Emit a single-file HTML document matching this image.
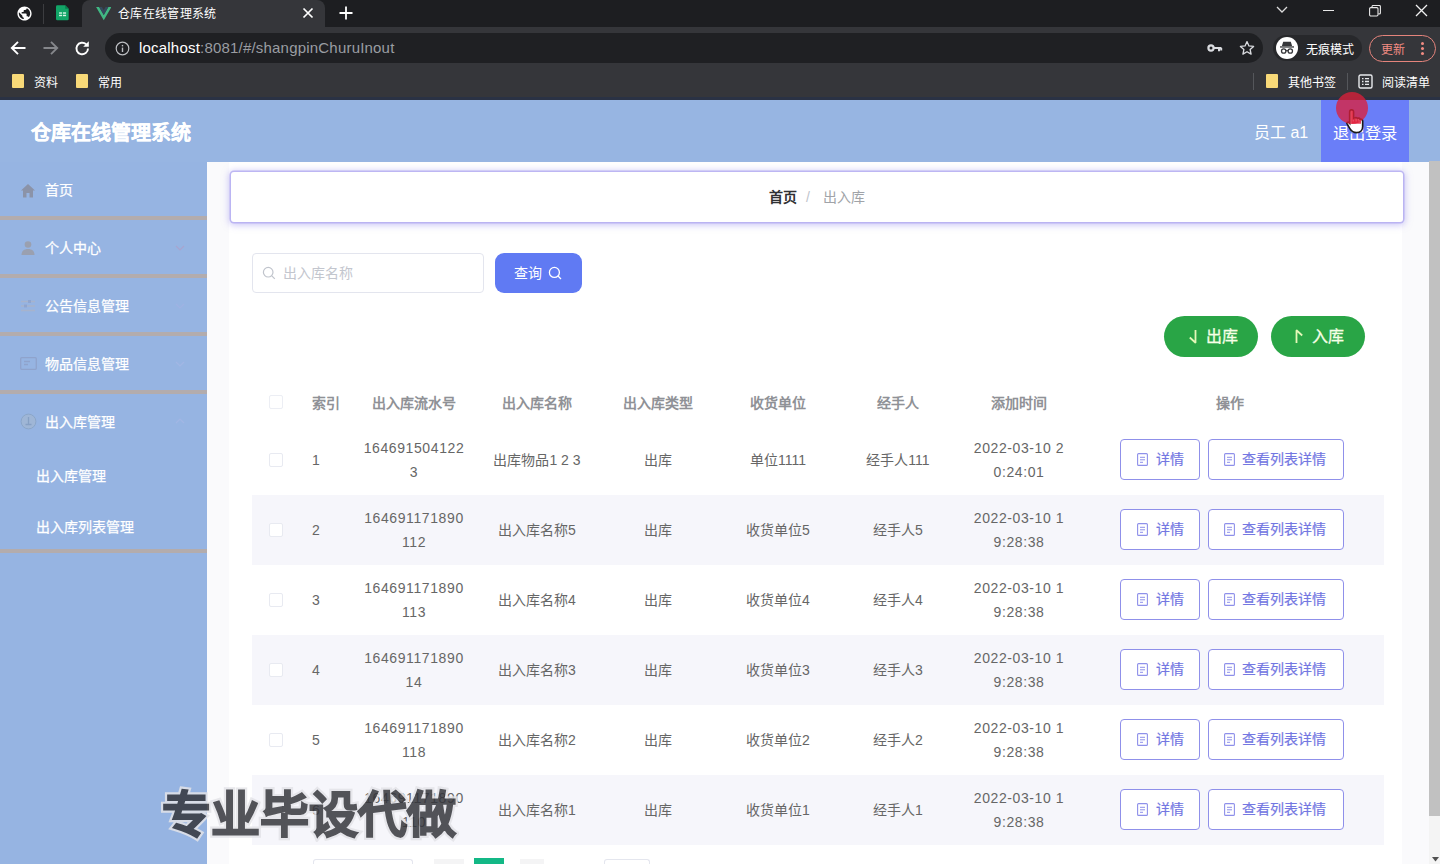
<!DOCTYPE html>
<html lang="zh-CN">
<head>
<meta charset="utf-8">
<title>仓库在线管理系统</title>
<style>
*{box-sizing:border-box;margin:0;padding:0}
html,body{width:1440px;height:864px;overflow:hidden;background:#fff;font-family:"Liberation Sans",sans-serif;}
body{position:relative}
.abs{position:absolute}
/* ---------- browser chrome ---------- */
#tabstrip{left:0;top:0;width:1440px;height:27px;background:#1d1e21}
#tab{left:82px;top:0;width:243px;height:27px;background:#35363a;border-radius:8px 8px 0 0}
#toolbar{left:0;top:27px;width:1440px;height:39px;background:#35363a}
#omni{left:105px;top:33px;width:1158px;height:30px;border-radius:15px;background:#1f2023}
#bookmarks{left:0;top:66px;width:1440px;height:32px;background:#35363a}
#chromeline{left:0;top:97px;width:1440px;height:3px;background:#2a3244}
.ct{color:#fff;font-size:12px;line-height:14px;white-space:nowrap;margin-top:1px}
/* ---------- app ---------- */
#header{left:0;top:100px;width:1440px;height:61.5px;background:#97b5e2}
#sidebar{left:0;top:162px;width:207px;height:702px;background:#96b4e2}
#main{left:207px;top:162px;width:1222px;height:702px;background:#fafafc}
#card{left:229px;top:162px;width:1173px;height:702px;background:#fff}
.mi{left:0;width:207px;height:58px;border-bottom:4px solid #b3acad;color:#fff;font-size:14px;-webkit-text-stroke:.25px #fff}
.mi span{position:absolute;left:45px;top:19px;line-height:18px}
.sub{left:36px;color:#fff;font-size:14px;-webkit-text-stroke:.25px #fff;line-height:18px}
#scroll{left:1429px;top:161px;width:11px;height:703px;background:#f4f4f4}
#thumb{left:1429px;top:161px;width:11px;height:655px;background:#c1c1c1}
/* table */
.th{top:395px;font-size:14px;color:#8f9196;font-weight:bold;line-height:16px;text-align:center;white-space:nowrap}
.row{left:252px;width:1132px;height:70px}
.row.s{background:#f6f6fb}
.c{position:absolute;font-size:14px;color:#666;line-height:24px;text-align:center;white-space:nowrap}
.cb{position:absolute;left:17px;top:28px;width:14px;height:14px;border:1px solid #e8eaf1;border-radius:2px;background:#fff}
.btn{position:absolute;top:14px;height:41px;border:1px solid #8f90ea;border-radius:4px;background:#fff;color:#7377e2;font-size:14px;line-height:39px;text-align:left;white-space:nowrap;-webkit-text-stroke:.2px #7377e2}
.btn span{position:absolute;top:0}
.n{letter-spacing:.6px}
</style>
</head>
<body>
<!-- chrome -->
<div id="tabstrip" class="abs"></div>
<div id="tab" class="abs"></div>
<div id="toolbar" class="abs"></div>
<div id="omni" class="abs"></div>
<div id="bookmarks" class="abs"></div>
<div id="chromeline" class="abs"></div>
<!-- tab strip icons -->
<svg class="abs" style="left:15.500px;top:4.500px" width="17" height="17" viewBox="0 0 24 24"><path fill="#fff" d="M12 2C6.480 2 2 6.480 2 12s4.480 10 10 10 10-4.480 10-10S17.520 2 12 2zm-1 17.930c-3.950-.490-7-3.850-7-7.930 0-.620.080-1.210.210-1.790L9 15v1c0 1.100.900 2 2 2v1.930zm6.900-2.540c-.260-.810-1-1.390-1.900-1.390h-1v-3c0-.550-.450-1-1-1H8v-2h2c.550 0 1-.450 1-1V7h2c1.100 0 2-.900 2-2v-.410c2.930 1.190 5 4.060 5 7.410 0 2.080-.800 3.970-2.100 5.390z"/></svg>
<div class="abs" style="left:43px;top:4px;width:1px;height:20px;background:#3c3d40"></div>
<svg class="abs" style="left:56px;top:5px" width="14" height="15.500" viewBox="0 0 16 17"><path d="M1.500 0h9l4 4v11.500a1.500 1.500 0 0 1-1.500 1.500h-11.500a1.500 1.500 0 0 1-1.500-1.500v-14a1.500 1.500 0 0 1 1.500-1.500z" fill="#12a567"/><path d="M10.500 0l4 4h-4z" fill="#0b7d4d"/><rect x="3.500" y="8" width="3.500" height="1.600" fill="#d7f5e6"/><rect x="8" y="8" width="3.500" height="1.600" fill="#d7f5e6"/><rect x="3.500" y="10.800" width="3.500" height="1.600" fill="#d7f5e6"/><rect x="8" y="10.800" width="3.500" height="1.600" fill="#d7f5e6"/></svg>
<svg class="abs" style="left:95.500px;top:7px" width="15.500" height="13.500" viewBox="0 0 17 15"><path d="M0 0h3.400l5.100 8.800 5.100-8.800h3.400l-8.500 14.700z" fill="#41b883"/><path d="M3.400 0h3.100l2 3.500 2-3.500h3.100l-5.100 8.800z" fill="#35495e"/></svg>
<div class="abs ct" style="left:118px;top:6px;font-size:12px;letter-spacing:.35px">仓库在线管理系统</div>
<svg class="abs" style="left:302px;top:7px" width="12" height="12" viewBox="0 0 12 12"><path d="M1.500 1.500l9 9M10.500 1.500l-9 9" stroke="#fff" stroke-width="1.700"/></svg>
<svg class="abs" style="left:339px;top:6px" width="14" height="14" viewBox="0 0 14 14"><path d="M7 0.500v13M0.500 7h13" stroke="#fff" stroke-width="1.800"/></svg>
<!-- window controls -->
<svg class="abs" style="left:1276px;top:6px" width="12" height="8" viewBox="0 0 12 8"><path d="M1 1l5 5 5-5" stroke="#dcdcdc" stroke-width="1.300" fill="none"/></svg>
<div class="abs" style="left:1323px;top:10px;width:11px;height:1px;background:#e8e8e8"></div>
<svg class="abs" style="left:1369px;top:5px" width="12" height="12" viewBox="0 0 12 12"><rect x="0.600" y="2.600" width="8.400" height="8.400" rx="1.200" fill="none" stroke="#e8e8e8" stroke-width="1.100"/><path d="M3 2.500v-1a1 1 0 0 1 1-1h6.400a1 1 0 0 1 1 1v6.400a1 1 0 0 1-1 1h-1" fill="none" stroke="#e8e8e8" stroke-width="1.100"/></svg>
<svg class="abs" style="left:1415px;top:4px" width="13" height="13" viewBox="0 0 13 13"><path d="M1 1l11 11M12 1l-11 11" stroke="#f2f2f2" stroke-width="1.300"/></svg>
<!-- toolbar -->
<svg class="abs" style="left:10px;top:40px" width="17" height="16" viewBox="0 0 17 16"><path d="M15.500 8h-13M8 1.800l-6.200 6.200 6.200 6.200" stroke="#fff" stroke-width="1.900" fill="none"/></svg>
<svg class="abs" style="left:42px;top:40px" width="17" height="16" viewBox="0 0 17 16"><path d="M1.500 8h13M9 1.800l6.200 6.200-6.200 6.200" stroke="#85878b" stroke-width="1.900" fill="none"/></svg>
<svg class="abs" style="left:74px;top:40px" width="17" height="17" viewBox="0 0 17 17"><path d="M14 8.500a5.800 5.800 0 1 1-1.800-4.200" stroke="#fff" stroke-width="1.900" fill="none"/><path d="M14.800 1.200v5.600h-5.600z" fill="#fff"/></svg>
<svg class="abs" style="left:115px;top:41px" width="15" height="15" viewBox="0 0 15 15"><circle cx="7.500" cy="7.500" r="6.300" fill="none" stroke="#bdbfc3" stroke-width="1.200"/><rect x="6.800" y="6.600" width="1.400" height="4.400" fill="#bdbfc3"/><rect x="6.800" y="3.900" width="1.400" height="1.500" fill="#bdbfc3"/></svg>
<div class="abs" style="left:139px;top:39px;font-size:15px;line-height:18px;color:#9a9da2;white-space:nowrap;letter-spacing:0.2px"><span style="color:#fff">localhost</span>:8081/#/shangpinChuruInout</div>
<svg class="abs" style="left:1207px;top:43px" width="16" height="10" viewBox="0 0 16 10"><circle cx="4" cy="5" r="2.600" fill="none" stroke="#dadce0" stroke-width="2.200"/><path d="M6.500 5h8M12 5v3.200M14.200 5v2.400" stroke="#dadce0" stroke-width="2" fill="none"/></svg>
<svg class="abs" style="left:1239px;top:40px" width="16" height="16" viewBox="0 0 16 16"><path d="M8 1.600l1.950 4.300 4.650.5-3.500 3.100 1 4.600-4.100-2.400-4.100 2.400 1-4.600-3.500-3.100 4.650-.5z" fill="none" stroke="#dadce0" stroke-width="1.300" stroke-linejoin="round"/></svg>
<div class="abs" style="left:1273px;top:35px;width:89px;height:26px;border-radius:13px;background:#27282b"></div><div class="abs" style="left:1276px;top:37px;width:22px;height:22px;border-radius:11px;background:#fff"></div>
<svg class="abs" style="left:1279px;top:41px" width="16" height="14" viewBox="0 0 16 14"><path d="M4.200 0.800h7.600l1.300 4.200h-10.200z" fill="#36373a"/><rect x="1" y="5.300" width="14" height="1.300" fill="#36373a"/><circle cx="4.700" cy="10" r="2.200" fill="none" stroke="#36373a" stroke-width="1.300"/><circle cx="11.300" cy="10" r="2.200" fill="none" stroke="#36373a" stroke-width="1.300"/><path d="M6.900 9.700h2.200" stroke="#36373a" stroke-width="1.200"/></svg>
<div class="abs ct" style="left:1306px;top:42px;font-size:12px">无痕模式</div>
<div class="abs" style="left:1369px;top:35px;width:67px;height:27px;border:1px solid #e5847c;border-radius:14px"></div>
<div class="abs ct" style="left:1381px;top:42px;font-size:12px;color:#f28b82">更新</div>
<div class="abs" style="left:1421px;top:42px;width:3px;height:3px;border-radius:2px;background:#f28b82;box-shadow:0 5px 0 #f28b82,0 10px 0 #f28b82"></div>
<!-- bookmarks -->
<div class="abs" style="left:12px;top:74px;width:12px;height:14px;background:#f8d978;border-radius:1px"></div>
<div class="abs ct" style="left:34px;top:75px">资料</div>
<div class="abs" style="left:76px;top:74px;width:12px;height:14px;background:#f8d978;border-radius:1px"></div>
<div class="abs ct" style="left:98px;top:75px">常用</div>
<div class="abs" style="left:1253px;top:73px;width:1px;height:17px;background:#55575b"></div>
<div class="abs" style="left:1266px;top:74px;width:12px;height:14px;background:#f8d978;border-radius:1px"></div>
<div class="abs ct" style="left:1288px;top:75px">其他书签</div>
<div class="abs" style="left:1347px;top:73px;width:1px;height:17px;background:#55575b"></div>
<svg class="abs" style="left:1358px;top:74px" width="15" height="15" viewBox="0 0 15 15"><rect x="1" y="1" width="13" height="13" rx="1.500" fill="none" stroke="#e8eaed" stroke-width="1.400"/><path d="M4 4.700h1.500M7 4.700h4M4 7.500h1.500M7 7.500h4M4 10.300h1.500M7 10.300h4" stroke="#e8eaed" stroke-width="1.300"/></svg>
<div class="abs ct" style="left:1382px;top:75px">阅读清单</div>


<!-- app -->
<div id="header" class="abs"></div>
<div id="sidebar" class="abs"></div>
<div id="main" class="abs"></div>
<div id="card" class="abs"></div>
<div id="scroll" class="abs"></div>
<div id="thumb" class="abs"></div>
<!-- header content -->
<div class="abs" style="left:30.5px;top:120px;font-size:20px;line-height:26px;font-weight:bold;color:#fff;white-space:nowrap;-webkit-text-stroke:0.3px #fff">仓库在线管理系统</div>
<div class="abs" style="left:1254px;top:121.5px;font-size:16px;line-height:22px;color:#fff;white-space:nowrap">员工 a1</div>
<div class="abs" style="left:1321px;top:100px;width:88px;height:61.5px;background:#6a7ef8"></div>
<div class="abs" style="left:1333px;top:121.5px;font-size:16.3px;line-height:22px;color:#fff;white-space:nowrap">退出登录</div>

<!-- sidebar menu -->
<div class="abs mi" style="top:162px"><span>首页</span></div>
<div class="abs mi" style="top:220px"><span>个人中心</span></div>
<div class="abs mi" style="top:278px"><span>公告信息管理</span></div>
<div class="abs mi" style="top:336px"><span>物品信息管理</span></div>
<div class="abs mi" style="top:394px;height:159px"><span>出入库管理</span></div>
<div class="abs sub" style="top:467px">出入库管理</div>
<div class="abs sub" style="top:518px">出入库列表管理</div>
<!-- sidebar icons -->
<svg class="abs" style="left:20px;top:183px" width="16" height="16" viewBox="0 0 16 16"><path d="M8 1l7 6.500h-2v7h-3.500v-4.500h-3v4.500h-3.500v-7h-2z" fill="#8b93a8"/></svg>
<svg class="abs" style="left:21px;top:240px" width="14" height="16" viewBox="0 0 14 16"><circle cx="7" cy="4.500" r="3.300" fill="#9aa0b0"/><path d="M0.500 15c0-4 2.500-6 6.500-6s6.500 2 6.500 6z" fill="#9aa0b0"/></svg>
<svg class="abs" style="left:20px;top:298px" width="16" height="16" viewBox="0 0 16 16"><path d="M1 3.500h14M1 8h14M1 12.500h14" stroke="#a7b3cc" stroke-width="1.400"/><rect x="8" y="2" width="3" height="3" fill="#8fa5cf"/><rect x="4" y="6.500" width="3" height="3" fill="#8fa5cf"/></svg>
<svg class="abs" style="left:20px;top:356px" width="17" height="15" viewBox="0 0 17 15"><rect x="0.700" y="1.700" width="15.600" height="11.600" rx="1" fill="none" stroke="#8fa3cc" stroke-width="1.300"/><path d="M4 5.500h6M4 8.500h4" stroke="#8fa3cc" stroke-width="1.300"/></svg>
<svg class="abs" style="left:20px;top:413px" width="17" height="17" viewBox="0 0 17 17"><circle cx="8.500" cy="8.500" r="7.400" fill="#9fb6d6" stroke="#8ba6c9" stroke-width="1"/><path d="M8.500 4v7M5.500 11.500h6" stroke="#86a0c4" stroke-width="1.300" fill="none"/></svg>
<!-- arrows -->
<svg class="abs" style="left:175px;top:245px" width="10" height="6" viewBox="0 0 10 6"><path d="M1 1l4 4 4-4" stroke="#a8a4cf" stroke-width="1.200" fill="none"/></svg>
<svg class="abs" style="left:175px;top:303px" width="10" height="6" viewBox="0 0 10 6"><path d="M1 1l4 4 4-4" stroke="#9fb2e3" stroke-width="1.200" fill="none"/></svg>
<svg class="abs" style="left:175px;top:361px" width="10" height="6" viewBox="0 0 10 6"><path d="M1 1l4 4 4-4" stroke="#a2b6e4" stroke-width="1.200" fill="none"/></svg>
<svg class="abs" style="left:175px;top:418px" width="10" height="6" viewBox="0 0 10 6"><path d="M1 5l4-4 4 4" stroke="#a2b6e4" stroke-width="1.200" fill="none"/></svg>

<!-- breadcrumb -->
<div class="abs" style="left:231px;top:172px;width:1172px;height:50px;background:#fff;border-radius:3px;box-shadow:0 0 0 1.5px rgba(176,168,240,.75),0 1px 7px 2px rgba(150,140,240,.5)"></div>
<div class="abs" style="left:769px;top:188px;font-size:14px;line-height:18px;font-weight:bold;color:#303133;white-space:nowrap">首页</div>
<div class="abs" style="left:806px;top:188px;font-size:14px;line-height:18px;color:#c0c4cc">/</div>
<div class="abs" style="left:823px;top:188px;font-size:14px;line-height:18px;color:#a0a3a8;white-space:nowrap">出入库</div>

<!-- search -->
<div class="abs" style="left:252px;top:253px;width:232px;height:40px;border:1px solid #e3e5ee;border-radius:4px;background:#fff"></div>
<svg class="abs" style="left:262px;top:266px" width="14" height="14" viewBox="0 0 14 14"><circle cx="6.200" cy="6.200" r="4.800" fill="none" stroke="#c0c4cc" stroke-width="1.200"/><path d="M9.800 9.800l3 3" stroke="#c0c4cc" stroke-width="1.200"/></svg>
<div class="abs" style="left:283px;top:264px;font-size:14px;line-height:18px;color:#c3c6ce;white-space:nowrap">出入库名称</div>
<div class="abs" style="left:495px;top:253px;width:87px;height:40px;border-radius:9px;background:#607af3"></div>
<div class="abs" style="left:514px;top:264px;font-size:14px;line-height:18px;color:#fff;white-space:nowrap">查询</div>
<svg class="abs" style="left:548px;top:266px" width="14" height="14" viewBox="0 0 14 14"><circle cx="6.400" cy="6.400" r="5" fill="none" stroke="#fff" stroke-width="1.300"/><path d="M10 10l3 3" stroke="#fff" stroke-width="1.300"/></svg>

<!-- green buttons -->
<div class="abs" style="left:1164px;top:316px;width:94px;height:41px;border-radius:21px;background:#29a546"></div>
<svg class="abs" style="left:1186px;top:329px" width="14" height="16" viewBox="0 0 14 16"><path d="M9.500 1v13M9.800 14l-6-5.500" stroke="#e4f8b8" stroke-width="1.800" fill="none"/></svg>
<div class="abs" style="left:1206px;top:326px;font-size:16px;line-height:22px;color:#f6ffe6;white-space:nowrap;-webkit-text-stroke:.3px #f6ffe6">出库</div>
<div class="abs" style="left:1271px;top:316px;width:94px;height:41px;border-radius:21px;background:#29a546"></div>
<svg class="abs" style="left:1292px;top:328px" width="14" height="16" viewBox="0 0 14 16"><path d="M4.500 15v-13M4.200 2l6 5.500" stroke="#e4f8b8" stroke-width="1.800" fill="none"/></svg>
<div class="abs" style="left:1312px;top:326px;font-size:16px;line-height:22px;color:#f6ffe6;white-space:nowrap;-webkit-text-stroke:.3px #f6ffe6">入库</div>

<!-- table header -->
<div class="abs" style="left:269px;top:395px;width:14px;height:14px;border:1px solid #eceef4;border-radius:2px;background:#fff"></div>
<div class="abs th" style="left:296px;width:60px">索引</div>
<div class="abs th" style="left:354px;width:120px">出入库流水号</div>
<div class="abs th" style="left:477px;width:120px">出入库名称</div>
<div class="abs th" style="left:598px;width:120px">出入库类型</div>
<div class="abs th" style="left:718px;width:120px">收货单位</div>
<div class="abs th" style="left:838px;width:120px">经手人</div>
<div class="abs th" style="left:959px;width:120px">添加时间</div>
<div class="abs th" style="left:1170px;width:120px">操作</div>
<div class="abs row" style="top:425px"><div class="cb"></div><div class="c" style="left:44px;width:40px;top:23px">1</div><div class="c n" style="left:102px;width:120px;top:11px">164691504122<br>3</div><div class="c" style="left:225px;width:120px;top:23px">出库物品1 2 3</div><div class="c" style="left:346px;width:120px;top:23px">出库</div><div class="c" style="left:466px;width:120px;top:23px">单位1111</div><div class="c" style="left:586px;width:120px;top:23px">经手人111</div><div class="c n" style="left:707px;width:120px;top:11px">2022-03-10 2<br>0:24:01</div><div class="btn" style="left:868px;width:80px"><svg style="position:absolute;left:16px;top:13px" width="11" height="13" viewBox="0 0 11 13"><rect x="0.600" y="0.600" width="9.800" height="11.800" rx="1" fill="none" stroke="#8e90ea" stroke-width="1.100"/><path d="M3 4.300h5M3 6.800h5M3 9.300h3" stroke="#8e90ea" stroke-width="1"/></svg><span style="left:35px">详情</span></div><div class="btn" style="left:956px;width:136px"><svg style="position:absolute;left:15px;top:13px" width="11" height="13" viewBox="0 0 11 13"><rect x="0.600" y="0.600" width="9.800" height="11.800" rx="1" fill="none" stroke="#8e90ea" stroke-width="1.100"/><path d="M3 4.300h5M3 6.800h5M3 9.300h3" stroke="#8e90ea" stroke-width="1"/></svg><span style="left:33px">查看列表详情</span></div></div>
<div class="abs row s" style="top:495px"><div class="cb"></div><div class="c" style="left:44px;width:40px;top:23px">2</div><div class="c n" style="left:102px;width:120px;top:11px">164691171890<br>112</div><div class="c" style="left:225px;width:120px;top:23px">出入库名称5</div><div class="c" style="left:346px;width:120px;top:23px">出库</div><div class="c" style="left:466px;width:120px;top:23px">收货单位5</div><div class="c" style="left:586px;width:120px;top:23px">经手人5</div><div class="c n" style="left:707px;width:120px;top:11px">2022-03-10 1<br>9:28:38</div><div class="btn" style="left:868px;width:80px"><svg style="position:absolute;left:16px;top:13px" width="11" height="13" viewBox="0 0 11 13"><rect x="0.600" y="0.600" width="9.800" height="11.800" rx="1" fill="none" stroke="#8e90ea" stroke-width="1.100"/><path d="M3 4.300h5M3 6.800h5M3 9.300h3" stroke="#8e90ea" stroke-width="1"/></svg><span style="left:35px">详情</span></div><div class="btn" style="left:956px;width:136px"><svg style="position:absolute;left:15px;top:13px" width="11" height="13" viewBox="0 0 11 13"><rect x="0.600" y="0.600" width="9.800" height="11.800" rx="1" fill="none" stroke="#8e90ea" stroke-width="1.100"/><path d="M3 4.300h5M3 6.800h5M3 9.300h3" stroke="#8e90ea" stroke-width="1"/></svg><span style="left:33px">查看列表详情</span></div></div>
<div class="abs row" style="top:565px"><div class="cb"></div><div class="c" style="left:44px;width:40px;top:23px">3</div><div class="c n" style="left:102px;width:120px;top:11px">164691171890<br>113</div><div class="c" style="left:225px;width:120px;top:23px">出入库名称4</div><div class="c" style="left:346px;width:120px;top:23px">出库</div><div class="c" style="left:466px;width:120px;top:23px">收货单位4</div><div class="c" style="left:586px;width:120px;top:23px">经手人4</div><div class="c n" style="left:707px;width:120px;top:11px">2022-03-10 1<br>9:28:38</div><div class="btn" style="left:868px;width:80px"><svg style="position:absolute;left:16px;top:13px" width="11" height="13" viewBox="0 0 11 13"><rect x="0.600" y="0.600" width="9.800" height="11.800" rx="1" fill="none" stroke="#8e90ea" stroke-width="1.100"/><path d="M3 4.300h5M3 6.800h5M3 9.300h3" stroke="#8e90ea" stroke-width="1"/></svg><span style="left:35px">详情</span></div><div class="btn" style="left:956px;width:136px"><svg style="position:absolute;left:15px;top:13px" width="11" height="13" viewBox="0 0 11 13"><rect x="0.600" y="0.600" width="9.800" height="11.800" rx="1" fill="none" stroke="#8e90ea" stroke-width="1.100"/><path d="M3 4.300h5M3 6.800h5M3 9.300h3" stroke="#8e90ea" stroke-width="1"/></svg><span style="left:33px">查看列表详情</span></div></div>
<div class="abs row s" style="top:635px"><div class="cb"></div><div class="c" style="left:44px;width:40px;top:23px">4</div><div class="c n" style="left:102px;width:120px;top:11px">164691171890<br>14</div><div class="c" style="left:225px;width:120px;top:23px">出入库名称3</div><div class="c" style="left:346px;width:120px;top:23px">出库</div><div class="c" style="left:466px;width:120px;top:23px">收货单位3</div><div class="c" style="left:586px;width:120px;top:23px">经手人3</div><div class="c n" style="left:707px;width:120px;top:11px">2022-03-10 1<br>9:28:38</div><div class="btn" style="left:868px;width:80px"><svg style="position:absolute;left:16px;top:13px" width="11" height="13" viewBox="0 0 11 13"><rect x="0.600" y="0.600" width="9.800" height="11.800" rx="1" fill="none" stroke="#8e90ea" stroke-width="1.100"/><path d="M3 4.300h5M3 6.800h5M3 9.300h3" stroke="#8e90ea" stroke-width="1"/></svg><span style="left:35px">详情</span></div><div class="btn" style="left:956px;width:136px"><svg style="position:absolute;left:15px;top:13px" width="11" height="13" viewBox="0 0 11 13"><rect x="0.600" y="0.600" width="9.800" height="11.800" rx="1" fill="none" stroke="#8e90ea" stroke-width="1.100"/><path d="M3 4.300h5M3 6.800h5M3 9.300h3" stroke="#8e90ea" stroke-width="1"/></svg><span style="left:33px">查看列表详情</span></div></div>
<div class="abs row" style="top:705px"><div class="cb"></div><div class="c" style="left:44px;width:40px;top:23px">5</div><div class="c n" style="left:102px;width:120px;top:11px">164691171890<br>118</div><div class="c" style="left:225px;width:120px;top:23px">出入库名称2</div><div class="c" style="left:346px;width:120px;top:23px">出库</div><div class="c" style="left:466px;width:120px;top:23px">收货单位2</div><div class="c" style="left:586px;width:120px;top:23px">经手人2</div><div class="c n" style="left:707px;width:120px;top:11px">2022-03-10 1<br>9:28:38</div><div class="btn" style="left:868px;width:80px"><svg style="position:absolute;left:16px;top:13px" width="11" height="13" viewBox="0 0 11 13"><rect x="0.600" y="0.600" width="9.800" height="11.800" rx="1" fill="none" stroke="#8e90ea" stroke-width="1.100"/><path d="M3 4.300h5M3 6.800h5M3 9.300h3" stroke="#8e90ea" stroke-width="1"/></svg><span style="left:35px">详情</span></div><div class="btn" style="left:956px;width:136px"><svg style="position:absolute;left:15px;top:13px" width="11" height="13" viewBox="0 0 11 13"><rect x="0.600" y="0.600" width="9.800" height="11.800" rx="1" fill="none" stroke="#8e90ea" stroke-width="1.100"/><path d="M3 4.300h5M3 6.800h5M3 9.300h3" stroke="#8e90ea" stroke-width="1"/></svg><span style="left:33px">查看列表详情</span></div></div>
<div class="abs row s" style="top:775px"><div class="cb"></div><div class="c" style="left:44px;width:40px;top:23px">6</div><div class="c n" style="left:102px;width:120px;top:11px">164691171890<br>110</div><div class="c" style="left:225px;width:120px;top:23px">出入库名称1</div><div class="c" style="left:346px;width:120px;top:23px">出库</div><div class="c" style="left:466px;width:120px;top:23px">收货单位1</div><div class="c" style="left:586px;width:120px;top:23px">经手人1</div><div class="c n" style="left:707px;width:120px;top:11px">2022-03-10 1<br>9:28:38</div><div class="btn" style="left:868px;width:80px"><svg style="position:absolute;left:16px;top:13px" width="11" height="13" viewBox="0 0 11 13"><rect x="0.600" y="0.600" width="9.800" height="11.800" rx="1" fill="none" stroke="#8e90ea" stroke-width="1.100"/><path d="M3 4.300h5M3 6.800h5M3 9.300h3" stroke="#8e90ea" stroke-width="1"/></svg><span style="left:35px">详情</span></div><div class="btn" style="left:956px;width:136px"><svg style="position:absolute;left:15px;top:13px" width="11" height="13" viewBox="0 0 11 13"><rect x="0.600" y="0.600" width="9.800" height="11.800" rx="1" fill="none" stroke="#8e90ea" stroke-width="1.100"/><path d="M3 4.300h5M3 6.800h5M3 9.300h3" stroke="#8e90ea" stroke-width="1"/></svg><span style="left:33px">查看列表详情</span></div></div>

<!-- pagination peeks -->
<div class="abs" style="left:313px;top:859px;width:100px;height:6px;border:1px solid #e4e6ee;border-bottom:0;border-radius:3px 3px 0 0;background:#fff"></div>
<div class="abs" style="left:434px;top:859px;width:30px;height:6px;background:#f4f4f5"></div>
<div class="abs" style="left:474px;top:858px;width:30px;height:7px;background:#13b886"></div>
<div class="abs" style="left:520px;top:859px;width:24px;height:6px;background:#f4f4f5"></div>
<div class="abs" style="left:604px;top:859px;width:46px;height:6px;border:1px solid #e4e6ee;border-bottom:0;border-radius:3px 3px 0 0;background:#fff"></div>

<!-- scrollbar arrow -->
<svg class="abs" style="left:1432px;top:857px" width="7" height="5" viewBox="0 0 7 5"><path d="M0 0h7l-3.500 4.500z" fill="#505050"/></svg>

<!-- cursor highlight -->

<svg class="abs" style="left:1345.5px;top:108px" width="20" height="27" viewBox="0 0 18 24"><path d="M5 1.500c1.200 0 1.800.8 1.800 2v6l1-.3c.6-1 2-.8 2.400.1.900-.7 2.100-.3 2.400.6 1.300-.4 2.400.4 2.400 1.800v5c0 3-2 5.300-5.500 5.300s-4.600-1.200-6-3.600l-2.500-4.300c-.6-1.100.7-2.200 1.700-1.200l.6.700v-10c0-1.200.6-2 1.700-2z" fill="#fff" stroke="#1a1a1a" stroke-width="1.500"/><path d="M5 2.300c.6 0 1 .5 1 1.300v8.400h1v-2.400c.5-.6 1.400-.5 1.600.2v2.200h1v-1.800c.5-.5 1.300-.4 1.600.3v1.500h1v-1c.7-.3 1.300.1 1.300.9v2.100h-8.500z" fill="#e94560"/></svg>
<div class="abs" style="left:1335.5px;top:91.5px;width:32px;height:32px;border-radius:16px;background:rgba(222,30,56,.76)"></div>

<!-- watermark -->
<div class="abs" style="left:162px;top:785px;opacity:.84"><div class="abs" style="left:0;top:0;font-size:49px;line-height:60px;font-weight:900;color:#e4e4e8;white-space:nowrap;-webkit-text-stroke:6px #e4e4e8">专业毕设代做</div><div class="abs" style="left:0;top:0;font-size:49px;line-height:60px;font-weight:900;color:#33343a;white-space:nowrap;-webkit-text-stroke:1.6px #33343a">专业毕设代做</div></div>

</body>
</html>
